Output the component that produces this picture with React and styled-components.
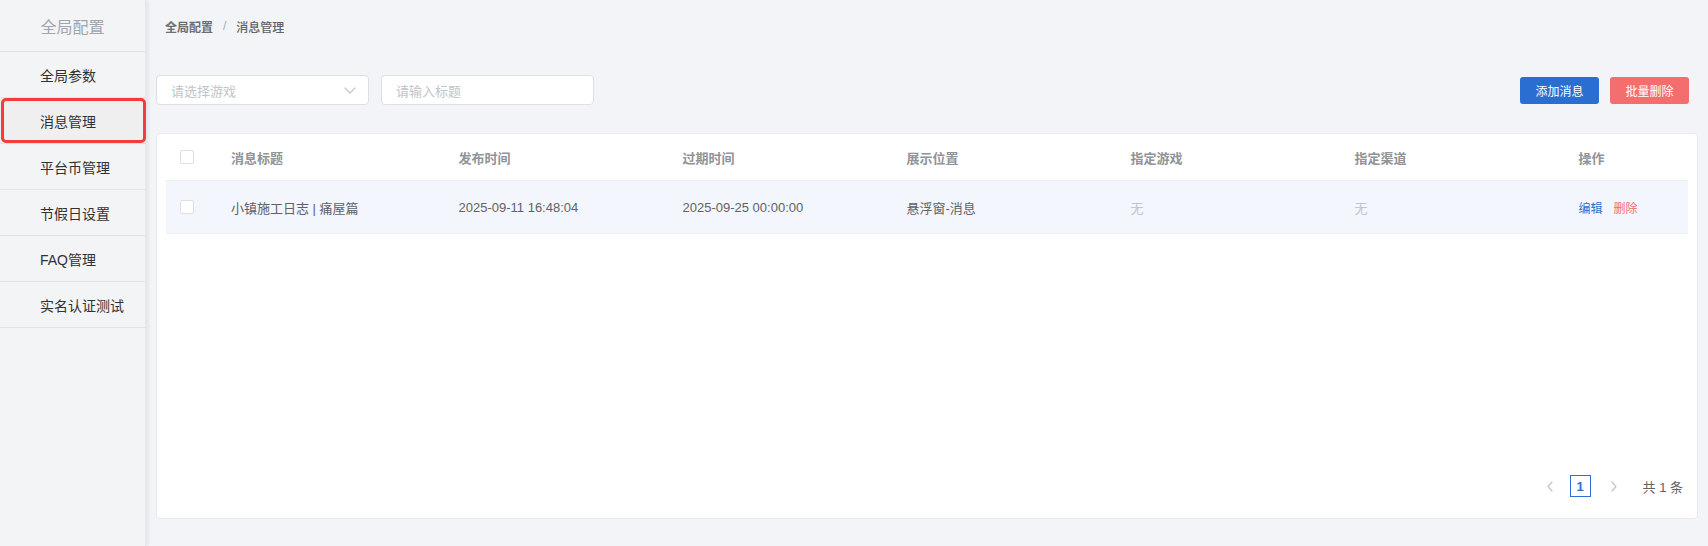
import React from "react";
import styled, { createGlobalStyle } from "styled-components";

const Global = createGlobalStyle`
  html, body { margin: 0; padding: 0; background: #f3f4f7; }
  body { font-family: "Liberation Sans", "Noto Sans CJK SC", sans-serif; }
  * { box-sizing: border-box; }
`;

const Layout = styled.div`
  display: flex;
  height: 546px;
  width: 1708px;
  overflow: hidden;
`;

const Sidebar = styled.aside`
  width: 146px;
  flex: none;
  background: #f3f4f6;
  border-right: 1px solid #e6e7eb;
  box-shadow: 2px 0 4px rgba(0, 21, 41, 0.08);
  position: relative;
  z-index: 1;
  display: flex;
  flex-direction: column;
`;

const SideTitle = styled.div`
  height: 52px;
  display: flex;
  align-items: center;
  justify-content: center;
  font-size: 16px;
  color: #a2a5ad;
  border-bottom: 1px solid #e2e3e7;
`;

const MenuItem = styled.div`
  position: relative;
  height: 46px;
  display: flex;
  align-items: center;
  padding-left: 40px;
  font-size: 14px;
  color: #303133;
  border-bottom: 1px solid #e2e3e7;
  background: ${(p) => (p.$active ? "#efefef" : "transparent")};
  &::after {
    content: "";
    display: ${(p) => (p.$active ? "block" : "none")};
    position: absolute;
    left: 1px;
    right: -1px;
    top: 0;
    bottom: 0;
    border: 3px solid #f73b3b;
    border-radius: 5px;
  }
`;

const Main = styled.main`
  flex: 1;
  display: flex;
  flex-direction: column;
  padding: 0 10px 27px 10px;
  min-width: 0;
`;

const Breadcrumb = styled.div`
  height: 52px;
  display: flex;
  align-items: center;
  padding-left: 9px;
  font-size: 12px;
  color: #606266;
  gap: 8px;
`;

const Crumb = styled.span`
  font-weight: ${(p) => (p.$strong ? 600 : 500)};
  color: ${(p) => (p.$strong ? "#6b6e75" : "#606266")};
`;

const Sep = styled.span`
  color: #a8abb2;
  margin: 0 2px;
`;

const Toolbar = styled.div`
  margin-top: 23px;
  height: 30px;
  display: flex;
  align-items: center;
  gap: 12px;
  padding-right: 9px;
`;

const Field = styled.div`
  width: 213px;
  height: 30px;
  background: #fff;
  border: 1px solid #dcdfe6;
  border-radius: 4px;
  display: flex;
  align-items: center;
  justify-content: space-between;
  padding: 0 12px 0 14px;
  font-size: 13px;
  color: #c0c4cc;
`;

const Spacer = styled.div`
  flex: 1;
`;

const Button = styled.button`
  width: 79px;
  height: 27px;
  border: none;
  border-radius: 3px;
  font-family: inherit;
  font-size: 12px;
  color: #fff;
  background: ${(p) => (p.$danger ? "#f56e6e" : "#2b6ed2")};
  padding: 0;
  margin-left: ${(p) => (p.$danger ? "-1px" : "0")};
`;

const Card = styled.section`
  margin-top: 28px;
  flex: 1;
  background: #fff;
  border: 1px solid #e8eaee;
  border-radius: 4px;
  padding: 0 9px 21px 9px;
  display: flex;
  flex-direction: column;
`;

const Row = styled.div`
  display: grid;
  grid-template-columns: 53px 227.5px repeat(5, 224px) 1fr;
  align-items: center;
  height: ${(p) => (p.$head ? "47px" : "53px")};
  border-bottom: 1px solid #ebeef5;
  background: ${(p) => (p.$head ? "#fff" : "#f3f6fd")};
  font-size: 13px;
`;

const Cell = styled.div`
  padding-left: ${(p) => (p.$check ? "14px" : "12px")};
  color: ${(p) => (p.$head ? "#909399" : p.$muted ? "#c0c4cc" : "#606266")};
  font-weight: ${(p) => (p.$head ? 700 : 400)};
  white-space: nowrap;
  display: flex;
  align-items: center;
  gap: 11px;
`;

const Checkbox = styled.span`
  width: 14px;
  height: 14px;
  border: 1px solid #dcdfe6;
  border-radius: 2px;
  background: #fff;
  display: block;
`;

const Link = styled.span`
  font-size: 12px;
  color: ${(p) => (p.$danger ? "#f56c6c" : "#2d6fd2")};
`;

const Pager = styled.div`
  margin-top: auto;
  display: flex;
  justify-content: flex-end;
  align-items: center;
  padding-right: 5px;
  font-size: 13px;
  color: #606266;
`;

const Arrow = styled.span`
  width: 22px;
  height: 22px;
  display: flex;
  align-items: center;
  justify-content: center;
  margin-right: ${(p) => p.$mr || 0}px;
`;

const PageNum = styled.span`
  width: 21px;
  height: 22px;
  border: 1px solid #2d6fd2;
  color: #2d6fd2;
  font-weight: 700;
  font-size: 13px;
  display: flex;
  align-items: center;
  justify-content: center;
  margin-right: 12px;
`;

const Total = styled.span`
  margin-left: 18px;
`;

const Chevron = ({ dir }) => {
  const d =
    dir === "left"
      ? "M6 1 L2 5.5 L6 10"
      : dir === "right"
      ? "M2 1 L6 5.5 L2 10"
      : "M1 2 L6 7 L11 2";
  const w = dir === "down" ? 12 : 8;
  const h = dir === "down" ? 9 : 11;
  return (
    <svg width={w} height={h} viewBox={`0 0 ${w} ${h}`} fill="none">
      <path d={d} stroke="#c0c4cc" strokeWidth="1.2" strokeLinecap="round" strokeLinejoin="round" />
    </svg>
  );
};

const menu = ["全局参数", "消息管理", "平台币管理", "节假日设置", "FAQ管理", "实名认证测试"];
const heads = ["消息标题", "发布时间", "过期时间", "展示位置", "指定游戏", "指定渠道", "操作"];

export default function App() {
  return (
    <>
      <Global />
      <Layout>
        <Sidebar>
          <SideTitle>全局配置</SideTitle>
          {menu.map((m) => (
            <MenuItem key={m} $active={m === "消息管理"}>
              {m}
            </MenuItem>
          ))}
        </Sidebar>
        <Main>
          <Breadcrumb>
            <Crumb $strong>全局配置</Crumb>
            <Sep>/</Sep>
            <Crumb>消息管理</Crumb>
          </Breadcrumb>
          <Toolbar>
            <Field>
              <span>请选择游戏</span>
              <Chevron dir="down" />
            </Field>
            <Field>
              <span>请输入标题</span>
            </Field>
            <Spacer />
            <Button>添加消息</Button>
            <Button $danger>批量删除</Button>
          </Toolbar>
          <Card>
            <Row $head>
              <Cell $check>
                <Checkbox />
              </Cell>
              {heads.map((h) => (
                <Cell key={h} $head>
                  {h}
                </Cell>
              ))}
            </Row>
            <Row>
              <Cell $check>
                <Checkbox />
              </Cell>
              <Cell>小镇施工日志 | 痛屋篇</Cell>
              <Cell>2025-09-11 16:48:04</Cell>
              <Cell>2025-09-25 00:00:00</Cell>
              <Cell>悬浮窗-消息</Cell>
              <Cell $muted>无</Cell>
              <Cell $muted>无</Cell>
              <Cell>
                <Link>编辑</Link>
                <Link $danger>删除</Link>
              </Cell>
            </Row>
            <Pager>
              <Arrow $mr={9}>
                <Chevron dir="left" />
              </Arrow>
              <PageNum>1</PageNum>
              <Arrow>
                <Chevron dir="right" />
              </Arrow>
              <Total>共 1 条</Total>
            </Pager>
          </Card>
        </Main>
      </Layout>
    </>
  );
}
